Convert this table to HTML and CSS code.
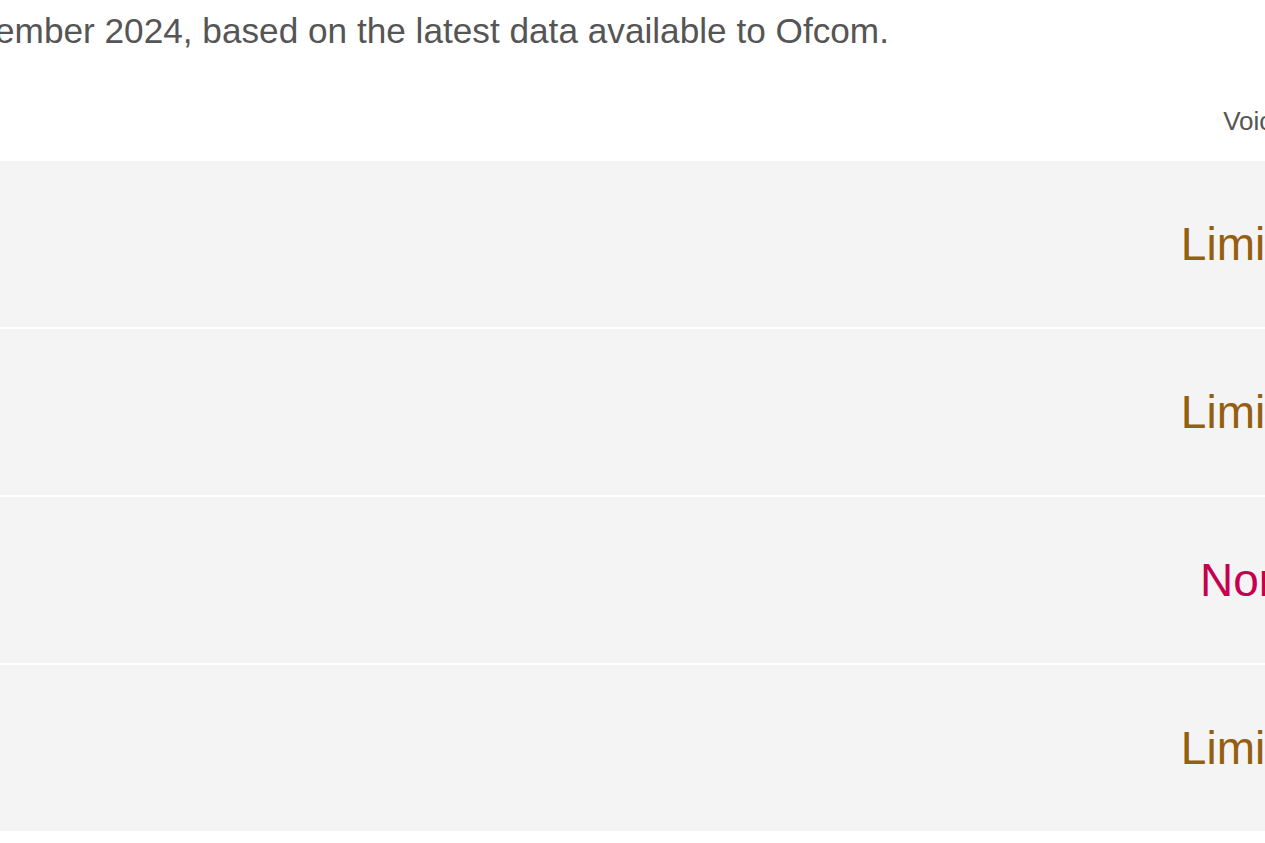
FILE: index.html
```html
<!DOCTYPE html>
<html lang="en">
<head>
<meta charset="utf-8">
<title>Coverage</title>
<link rel="stylesheet" href="styles.css">
</head>
<body>
<div class="page">
  <p class="intro">ember 2024, based on the latest data available to Ofcom.</p>
  <div class="table">
    <div class="head">
      <div class="cell label"></div>
      <div class="cell col">Voice</div>
    </div>
    <div class="row">
      <div class="cell label"></div>
      <div class="cell val limited">Limited</div>
    </div>
    <div class="row">
      <div class="cell label"></div>
      <div class="cell val limited">Limited</div>
    </div>
    <div class="row">
      <div class="cell label"></div>
      <div class="cell val none">None</div>
    </div>
    <div class="row">
      <div class="cell label"></div>
      <div class="cell val limited">Limited</div>
    </div>
  </div>
</div>
</body>
</html>
```

FILE: styles.css
```css
html, body {
  margin: 0;
  padding: 0;
  background: #ffffff;
  overflow: hidden;
}
body {
  font-family: "Liberation Sans", Arial, sans-serif;
  color: #555555;
}
.page {
  width: 1400px;
}
.intro {
  margin: 0 0 0 -5px;
  padding-top: 11px;
  font-size: 35.2px;
  line-height: 40px;
  color: #555555;
  white-space: nowrap;
}
.table {
  margin-top: 38px;
  display: flex;
  flex-direction: column;
  gap: 2px;
}
.head, .row {
  display: grid;
  grid-template-columns: 1155px 200px;
}
.head {
  height: 70px;
  align-items: center;
}
.row {
  height: 166px;
  background: #f4f4f4;
  align-items: center;
}
.col {
  text-align: center;
  font-size: 26px;
  color: #555555;
  padding-bottom: 6px;
}
.val {
  text-align: center;
  font-size: 46px;
}
.limited {
  color: #94600f;
}
.none {
  color: #c4004f;
}
```
